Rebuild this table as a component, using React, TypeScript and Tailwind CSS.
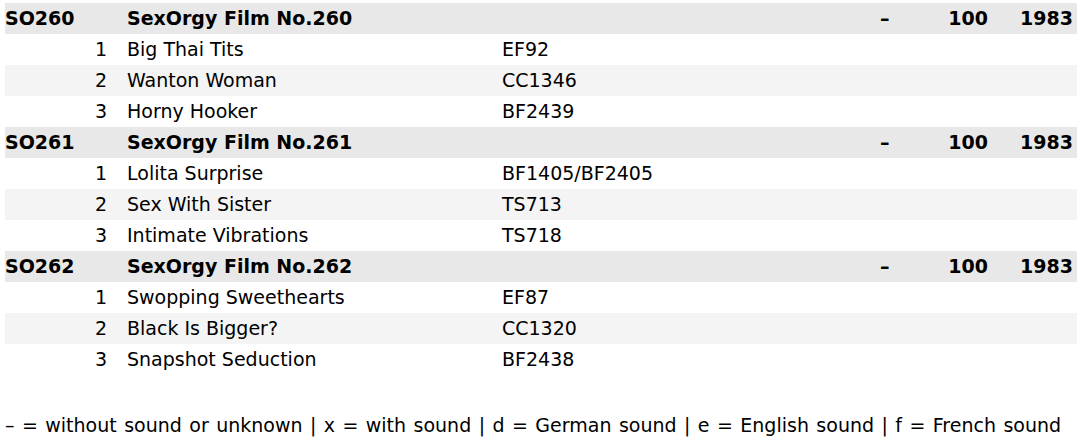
const films = [
  {
    code: "SO260",
    title: "SexOrgy Film No.260",
    tracks: [
      ["Big Thai Tits", "EF92"],
      ["Wanton Woman", "CC1346"],
      ["Horny Hooker", "BF2439"],
    ],
  },
  {
    code: "SO261",
    title: "SexOrgy Film No.261",
    tracks: [
      ["Lolita Surprise", "BF1405/BF2405"],
      ["Sex With Sister", "TS713"],
      ["Intimate Vibrations", "TS718"],
    ],
  },
  {
    code: "SO262",
    title: "SexOrgy Film No.262",
    tracks: [
      ["Swopping Sweethearts", "EF87"],
      ["Black Is Bigger?", "CC1320"],
      ["Snapshot Seduction", "BF2438"],
    ],
  },
];

function Row({
  bg,
  bold,
  code,
  num,
  title,
  ref,
  sound,
  length,
  year,
}: {
  bg: string;
  bold?: boolean;
  code?: string;
  num?: string;
  title: string;
  ref?: string;
  sound?: string;
  length?: string;
  year?: string;
}) {
  return (
    <div className={`flex h-[31px] items-center ${bg} ${bold ? "font-bold" : ""}`}>
      <div className="w-[80px]">{code}</div>
      <div className="w-[22px] text-right">{num}</div>
      <div className="ml-[20px] w-[375px]">{title}</div>
      <div className="w-[378px]">{ref}</div>
      <div className="w-[20px]">{sound}</div>
      <div className="w-[88px] text-right">{length}</div>
      <div className="w-[85px] text-right">{year}</div>
    </div>
  );
}

export default function App() {
  return (
    <main className="min-h-[444px] bg-white pt-[3px] text-[19px] leading-none text-black [font-family:'DejaVu_Sans',Verdana,sans-serif]">
      <section className="ml-[5px] w-[1072px]">
        {films.map((f) => (
          <div key={f.code}>
            <Row bg="bg-[#e8e8e8]" bold code={f.code} title={f.title} sound="–" length="100" year="1983" />
            {f.tracks.map(([t, r], i) => (
              <Row key={t} bg={i === 1 ? "bg-[#f4f4f4]" : "bg-white"} num={String(i + 1)} title={t} ref={r} />
            ))}
          </div>
        ))}
      </section>
      <p className="mt-[41px] ml-[5px] whitespace-nowrap [word-spacing:1.4px]">
        – = without sound or unknown | x = with sound | d = German sound | e = English sound | f = French sound
      </p>
    </main>
  );
}
